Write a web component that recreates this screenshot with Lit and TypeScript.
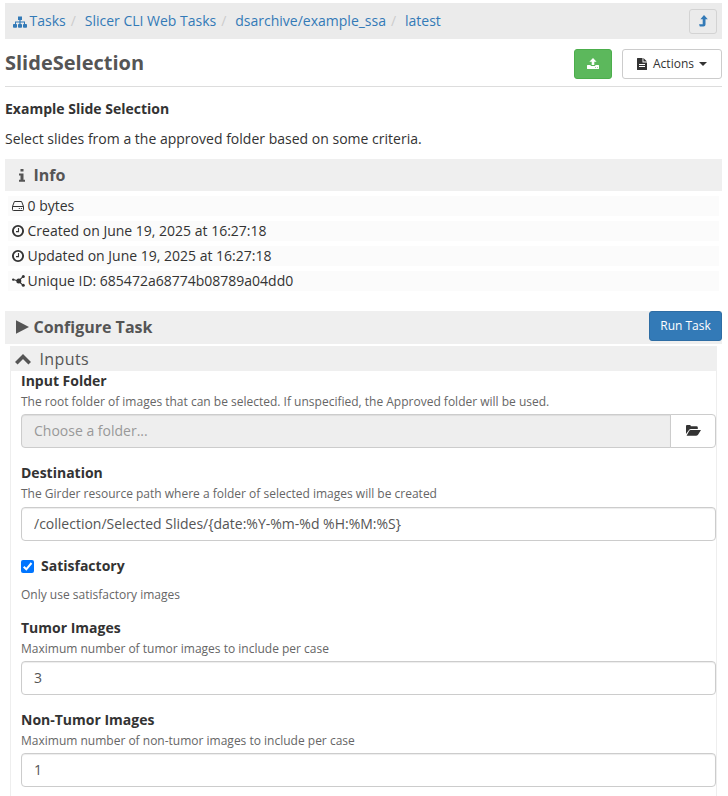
import { LitElement, html, css, svg, nothing, type TemplateResult } from "lit";
import { customElement, property } from "lit/decorators.js";

const shapes: Record<string, { w: number; h: number; body: TemplateResult }> = {
  sitemap: { w: 14, h: 12, body: svg`<path fill="currentColor" d="M5 0.5h4v3.4H7.6V5.5H12V8h1q1 0 1 .8V11q0 .8-.8.8h-2.4q-.8 0-.8-.8V8.8q0-.8.8-.8h.2V6.5H7.6V8h.6q.8 0 .8.8V11q0 .8-.8.8H5.8q-.8 0-.8-.8V8.8Q5 8 5.8 8h.6V6.5H3V8h.2q.8 0 .8.8V11q0 .8-.8.8H.8Q0 11.8 0 11V8.800q0-.8.8-.8H2V5.500h4.400V3.900H5z"/>` },
  levelup: { w: 8, h: 12, body: svg`<path fill="currentColor" d="M5 0 8.800 4.300H6.500V9.500Q6.500 11.500 4.500 11.500H.8L0 9.300H3.700V4.300H1.400z"/>` },
  upload: { w: 12, h: 11, body: svg`<path fill="currentColor" d="M6 0 9.600 3.800H7.300V7H4.700V3.800H2.400zM.6 7H3.700V8.100H8.300V7H11.400Q12 7 12 7.600V10.400Q12 11 11.400 11H.6Q0 11 0 10.400V7.600Q0 7 .6 7z"/><path stroke="#5cb85c" stroke-width=".7" d="M8.200 9.500h.8M10 9.500h.8"/>` },
  doc: { w: 10, h: 12, body: svg`<path fill="currentColor" d="M.6 0H5.500V4.500H10V11.400Q10 12 9.400 12H.6Q0 12 0 11.400V.6Q0 0 .6 0zM6.400 0 10 3.600H6.400z"/><path stroke="#fff" d="M2 6.500h6M2 8.500h6"/>` },
  info: { w: 6, h: 13, body: svg`<path fill="currentColor" d="M1.500 0h3v2.600h-3zM0 4.500h4.500v6.200H6v2H0v-2h1.500V6.400H0z"/>` },
  hdd: { w: 12, h: 10, body: svg`<path fill="none" stroke="currentColor" stroke-linejoin="round" d="M2.400.5h7.200L11.500 5.500v3.200q0 .8-.8.8H1.300q-.8 0-.8-.8V5.500zM.5 5.500h11"/><path stroke="currentColor" d="M6.800 7.500h1M8.900 7.500h1"/>` },
  clock: { w: 12, h: 12, body: svg`<circle cx="6" cy="6" r="5.100" fill="none" stroke="currentColor" stroke-width="1.900"/><path fill="none" stroke="currentColor" stroke-width="1.100" d="M6.500 3V6.600H4"/>` },
  network: { w: 13, h: 12, body: svg`<path fill="none" stroke="currentColor" stroke-width="1.100" d="M1 4.500 6.500 6 10.800 1.800M6.500 6l4.300 4.200"/><circle cx="6.800" cy="6" r="2.500" fill="currentColor"/><circle cx="1.200" cy="4.600" r="1.200" fill="currentColor"/><circle cx="11.300" cy="1.500" r="1.500" fill="currentColor"/><circle cx="11.300" cy="10.300" r="1.500" fill="currentColor"/>` },
  play: { w: 13, h: 14, body: svg`<path fill="currentColor" d="M0 0.300 13 7 0 13.700z"/>` },
  chevron: { w: 16, h: 11, body: svg`<path fill="none" stroke="currentColor" stroke-width="3.600" d="M1.300 9.300 8 2.600l6.700 6.700"/>` },
  folder: { w: 15, h: 11, body: svg`<path fill="currentColor" d="M0 9V1Q0 0 1 0H3.800Q4.800 0 4.800 1.300H10.500Q11.800 1.300 11.800 2.500V4H5Q3.600 4 2.600 5.400zM4.600 5H15L12 9.700Q11.200 10.800 10 10.800H.600L3 6.200Q3.600 5 4.600 5z"/>` },
  check: { w: 13, h: 13, body: svg`<rect width="13" height="13" rx="2" fill="#0075ff"/><path fill="none" stroke="#fff" stroke-width="2" d="M2.700 6.700 5.300 9.300 10.500 3"/>` },
};

const icon = (name: string) => {
  const s = shapes[name];
  return html`<svg class="icon" width=${s.w} height=${s.h} viewBox="0 0 ${s.w} ${s.h}" overflow="visible" aria-hidden="true">${s.body}</svg>`;
};

@customElement("task-field")
class TaskField extends LitElement {
  @property() label = "";
  @property() help = "";
  @property() value = "";
  @property() placeholder = "";
  @property({ type: Boolean }) browse = false;

  static styles = css`
    :host { display: block; height: 92.4px; }
    * { box-sizing: border-box; }
    .label { font-weight: 700; line-height: 20px; height: 20px; color: #333; }
    .help { font-size: 12px; line-height: 20px; height: 23.2px; padding-top: 1px; color: #666; }
    .group { display: flex; height: 34px; }
    input {
      flex: 1; min-width: 0; height: 34px; margin: 0; padding: 5.45px 12px 6.55px;
      font: inherit; color: #555; background: #fff;
      border: 1px solid #ccc; border-radius: 4px; outline: none;
      box-shadow: inset 0 1px 1px rgba(0, 0, 0, 0.075);
    }
    input::placeholder { color: #999; opacity: 1; }
    input.joined { background: #eee; border-radius: 4px 0 0 4px; }
    button {
      width: 46px; margin-left: -1px; padding: 0 0 1px; display: flex; align-items: center; justify-content: center;
      background: #fff; border: 1px solid #ccc; border-radius: 0 4px 4px 0; color: #333;
    }
    .icon { display: block; }
  `;

  render() {
    return html`
      <div class="label">${this.label}</div>
      <div class="help">${this.help}</div>
      <div class="group">
        <input class=${this.browse ? "joined" : ""} .value=${this.value} placeholder=${this.placeholder} ?readonly=${this.browse} />
        ${this.browse ? html`<button aria-label="Browse">${icon("folder")}</button>` : nothing}
      </div>
    `;
  }
}

@customElement("app-root")
class AppRoot extends LitElement {
  static styles = css`
    :host {
      display: block; height: 796px; overflow: hidden; padding: 3px 6px 0 5px; box-sizing: border-box;
      background: #fff; color: #333; font: 14px/20px "Open Sans", sans-serif;
    }
    * { box-sizing: border-box; }
    .icon { display: block; flex: none; }
    .crumbs { height: 36px; display: flex; align-items: center; padding: 0 5px 0 8px; background: #ebebeb; color: #337ab7; }
    .crumbs .icon { margin: 2px 2.5px 0 0; }
    .sep { color: #ccc; padding: 0 8.900px 0 5px; }
    .up {
      margin-left: auto; width: 28px; height: 25px; display: flex; align-items: center; justify-content: center;
      border: 1px solid #d3d3d3; border-radius: 3px; background: #ebebeb; color: #337ab7; padding: 0;
    }
    .crumbs .up .icon { margin: 0 0 1px; }
    .title { height: 48px; display: flex; align-items: center; border-bottom: 1px solid #ddd; padding-top: 2px; }
    h1 { margin: 0; flex: 1; font-size: 20px; line-height: 28px; font-weight: 700; color: #555; padding-bottom: 1px; }
    .btn {
      height: 30px; display: flex; align-items: center; justify-content: center; padding: 0;
      font: 12px/18px "Open Sans", sans-serif; border: 1px solid #ccc; border-radius: 3px; background: #fff; color: #333;
    }
    .green { width: 38px; background: #5cb85c; border-color: #4cae4c; color: #fff; margin-right: 10px; }
    .actions { width: 100px; padding-top: 1px; }
    .actions .icon { margin-right: 6px; }
    .caret { margin-left: 5px; border: 4px solid transparent; border-top-color: #333; border-bottom: 0; }
    .subtitle { margin-top: 12px; font-weight: 700; }
    .desc { margin-top: 10px; letter-spacing: 0.01px; }
    .bar { display: flex; align-items: center; background: #efefef; color: #555; font-size: 16px; font-weight: 700; }
    .info { height: 32px; margin-top: 10px; padding-left: 14px; }
    .info .icon { margin-right: 8.500px; }
    .facts { padding: 5px 3px 0; height: 120px; }
    .fact { height: 20px; margin-bottom: 5px; padding-left: 4px; display: flex; align-items: center; background: #fbfbfb; white-space: nowrap; }
    .glyph { width: 13px; margin-right: 2.500px; display: flex; }
    .config { height: 33px; padding-left: 11px; align-items: flex-start; line-height: 32px; }
    .config .icon { margin: 9px 4.500px 0 0; }
    .run { margin-left: auto; width: 73px; background: #337ab7; border-color: #2e6da4; color: #fff; }
    .panel { margin: 2px 5px 0; }
    .head { height: 25px; padding-left: 5px; display: flex; align-items: center; background: #efefef; color: #555; font-size: 16px; letter-spacing: 0.4px; }
    .head .icon { margin: 2px 8.500px 0 0; }
    .body { border: solid #eee; border-width: 0 1px; padding: 0 0 0 10px; height: 440px; }
    .checkbox { height: 62px; }
    .option { height: 20.2px; display: flex; align-items: center; font-weight: 700; }
    .option .icon { margin: 2px 7px 0 0; }
    .note { font-size: 12px; color: #666; margin-top: 9px; }
  `;

  private crumbs = ["Tasks", "Slicer CLI Web Tasks", "dsarchive/example_ssa", "latest"];
  private facts = [
    ["hdd", "0 bytes"],
    ["clock", "Created on June 19, 2025 at 16:27:18"],
    ["clock", "Updated on June 19, 2025 at 16:27:18"],
    ["network", "Unique ID: 685472a68774b08789a04dd0"],
  ];

  render() {
    return html`
      <nav class="crumbs">
        ${icon("sitemap")}
        ${this.crumbs.map((c, i) => html`${i ? html`<span class="sep">/</span>` : nothing}<span>${c}</span>`)}
        <button class="up" aria-label="Up one level">${icon("levelup")}</button>
      </nav>
      <header class="title">
        <h1>SlideSelection</h1>
        <button class="btn green" aria-label="Upload">${icon("upload")}</button>
        <button class="btn actions">${icon("doc")}Actions<span class="caret"></span></button>
      </header>
      <div class="subtitle">Example Slide Selection</div>
      <div class="desc">Select slides from a the approved folder based on some criteria.</div>
      <div class="bar info">${icon("info")}Info</div>
      <div class="facts">
        ${this.facts.map(([i, t]) => html`<div class="fact"><span class="glyph">${icon(i)}</span>${t}</div>`)}
      </div>
      <div class="bar config">${icon("play")}Configure Task<button class="btn run">Run Task</button></div>
      <section class="panel">
        <div class="head">${icon("chevron")}Inputs</div>
        <div class="body">
          <task-field label="Input Folder" help="The root folder of images that can be selected. If unspecified, the Approved folder will be used." placeholder="Choose a folder..." browse></task-field>
          <task-field label="Destination" help="The Girder resource path where a folder of selected images will be created" value="/collection/Selected Slides/{date:%Y-%m-%d %H:%M:%S}"></task-field>
          <div class="checkbox">
            <div class="option">${icon("check")}Satisfactory</div>
            <div class="note">Only use satisfactory images</div>
          </div>
          <task-field label="Tumor Images" help="Maximum number of tumor images to include per case" value="3"></task-field>
          <task-field label="Non-Tumor Images" help="Maximum number of non-tumor images to include per case" value="1"></task-field>
        </div>
      </section>
    `;
  }
}
